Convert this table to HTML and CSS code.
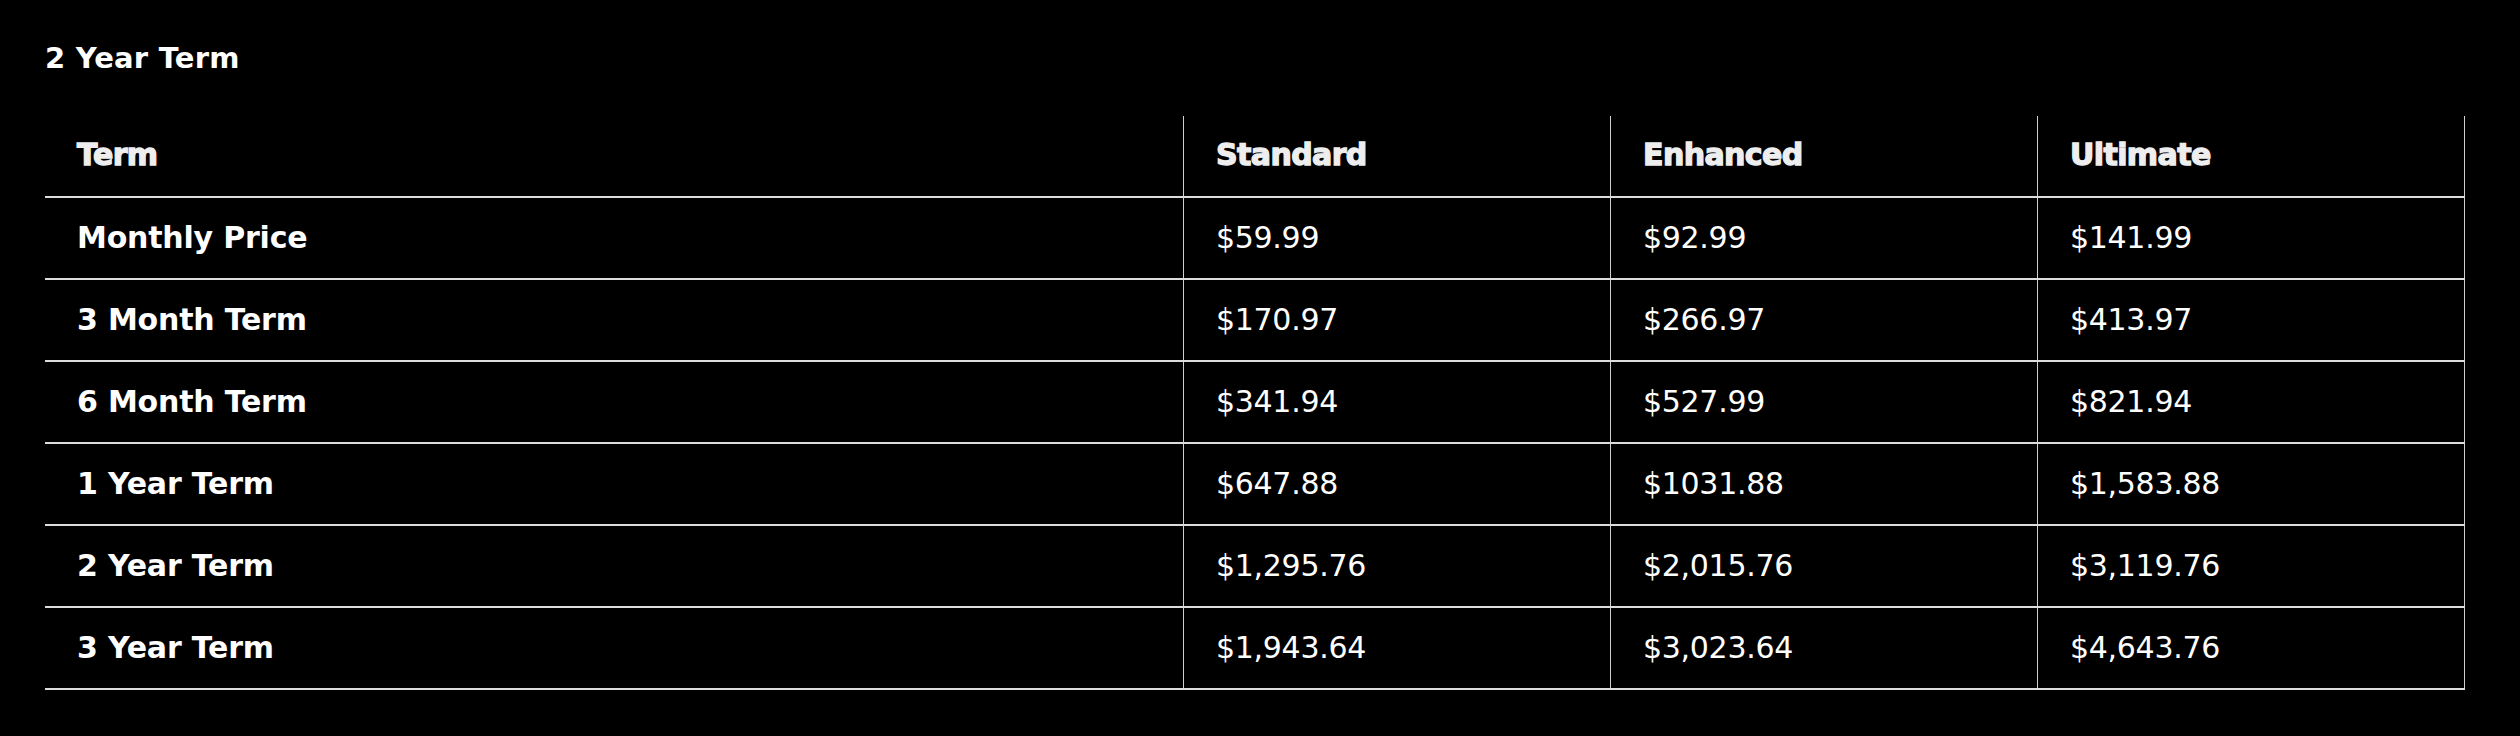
FILE: index.html
```html
<!DOCTYPE html>
<html lang="en">
<head>
<meta charset="utf-8">
<title>2 Year Term</title>
<link rel="stylesheet" href="styles.css">
</head>
<body>
<main class="page">
  <h2 class="title">2 Year Term</h2>
  <table class="prices">
    <thead>
      <tr>
        <th class="label-col">Term</th>
        <th>Standard</th>
        <th>Enhanced</th>
        <th>Ultimate</th>
      </tr>
    </thead>
    <tbody>
      <tr><th class="label-col">Monthly Price</th><td>$59.99</td><td>$92.99</td><td>$141.99</td></tr>
      <tr><th class="label-col">3 Month Term</th><td>$170.97</td><td>$266.97</td><td>$413.97</td></tr>
      <tr><th class="label-col">6 Month Term</th><td>$341.94</td><td>$527.99</td><td>$821.94</td></tr>
      <tr><th class="label-col">1 Year Term</th><td>$647.88</td><td>$1031.88</td><td>$1,583.88</td></tr>
      <tr><th class="label-col">2 Year Term</th><td>$1,295.76</td><td>$2,015.76</td><td>$3,119.76</td></tr>
      <tr><th class="label-col">3 Year Term</th><td>$1,943.64</td><td>$3,023.64</td><td>$4,643.76</td></tr>
    </tbody>
  </table>
</main>
</body>
</html>
```

FILE: styles.css
```css
html, body {
  margin: 0;
  padding: 0;
  background: #000;
}

body {
  font-family: "DejaVu Sans", "Liberation Sans", sans-serif;
  color: #fff;
}

.page {
  padding: 40px 55px 0 45px;
}

.title {
  margin: 0 0 40px 0;
  font-size: 29px;
  line-height: 36px;
  font-weight: 700;
  color: #fff;
  letter-spacing: 0.2px;
}

.prices {
  width: 2420px;
  border-collapse: collapse;
  table-layout: fixed;
}

.prices th,
.prices td {
  text-align: left;
  padding: 0 0 0 32px;
  border-bottom: 2px solid #dcdcdc;
  border-left: 1px solid #cfcfcf;
  font-size: 30px;
  white-space: nowrap;
}

.prices .label-col {
  width: 1106px;
  border-left: none;
}

.prices th:last-child,
.prices td:last-child {
  border-right: 1px solid #cfcfcf;
}

.prices thead th {
  height: 77px;
  padding-bottom: 3px;
  font-weight: 700;
  color: #eeeeee;
  letter-spacing: -0.6px;
  -webkit-text-stroke: 1.3px #eeeeee;
}

.prices tbody th,
.prices tbody td {
  height: 78px;
  padding-bottom: 2px;
}

.prices tbody th {
  font-weight: 700;
  color: #fff;
  letter-spacing: -0.2px;
}

.prices tbody td {
  font-weight: 400;
  color: #fff;
  letter-spacing: -0.3px;
}
```
